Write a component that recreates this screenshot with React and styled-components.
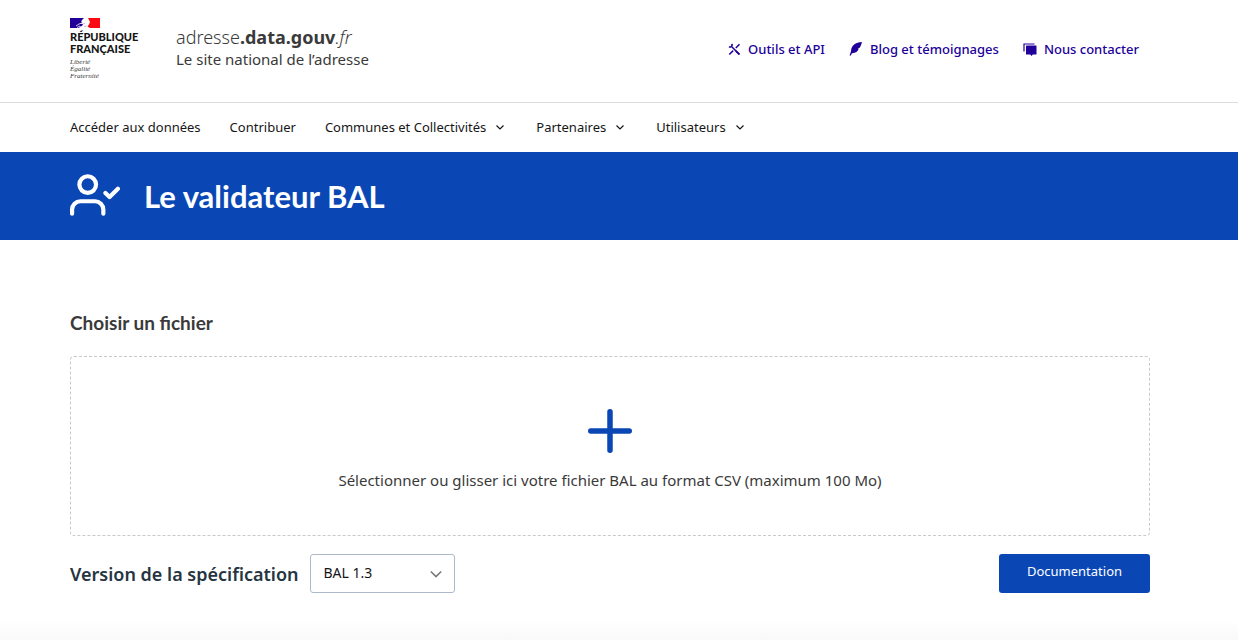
import React from "react";
import styled, { createGlobalStyle } from "styled-components";

const GlobalStyle = createGlobalStyle`
  *, *::before, *::after { box-sizing: border-box; }
  body {
    margin: 0;
    background: #fff;
    color: #3a3a3a;
    font-family: "Noto Sans", "Open Sans", sans-serif;
    font-size: 14px;
  }
  h1, h2, p, ul { margin: 0; padding: 0; }
  ul { list-style: none; }
  a { text-decoration: none; }
`;

const Page = styled.div`
  min-height: 100vh;
  display: flex;
  flex-direction: column;
`;

const Container = styled.div`
  width: 100%;
  padding: 0 88px 0 70px;
`;

const HeaderTop = styled(Container)`
  display: flex;
  align-items: center;
  justify-content: space-between;
  height: 102px;
  padding-bottom: 4px;
`;

const Brand = styled.a`
  display: flex;
  align-items: flex-start;
  gap: 36px;
  color: #3a3a3a;
`;

const Marianne = styled.div`
  display: flex;
  flex-direction: column;
  align-items: flex-start;
  width: 70px;
`;

const StateName = styled.span`
  margin-top: 3px;
  color: #161616;
  font: 900 11px/12px Lato, sans-serif;
  white-space: nowrap;
`;

const Motto = styled.span`
  margin-top: 4px;
  color: #3a3a3a;
  font: italic 7px/7px "Liberation Serif", serif;
`;

const Service = styled.div`
  padding-top: 7px;
`;

const ServiceName = styled.p`
  font-size: 18px;
  line-height: 24px;
  font-weight: 300;

  b { font-weight: 700; }
`;

const ServiceTagline = styled.p`
  font-size: 15px;
  line-height: 20px;
`;

const QuickLinks = styled.ul`
  display: flex;
  gap: 24px;
  padding-right: 11px;
`;

const QuickLink = styled.a`
  display: flex;
  align-items: center;
  gap: 7px;
  color: #21009a;
  font-size: 13px;
  font-weight: 500;
  line-height: 20px;
`;

const NavBar = styled.nav`
  border-top: 1px solid #ddd;
`;

const NavList = styled(Container).attrs({ as: "ul" })`
  display: flex;
  gap: 29px;
  height: 49px;
  align-items: center;
  padding-bottom: 2px;
`;

const navItem = `
  display: flex;
  align-items: center;
  gap: 7px;
  padding: 0;
  border: 0;
  background: none;
  color: #161616;
  font: 400 13px/20px "Noto Sans", sans-serif;
  cursor: pointer;
`;
const NavLink = styled.a`${navItem}`;
const NavButton = styled.button`${navItem}`;

const Banner = styled.header`
  background: #0a47b5;
  color: #fff;
`;

const BannerContent = styled(Container)`
  display: flex;
  align-items: center;
  gap: 24px;
  height: 88px;
  padding-bottom: 2px;
`;

const Title = styled.h1`
  padding-top: 2px;
  font: 700 31px/36px Lato, sans-serif;
`;

const Main = styled(Container).attrs({ as: "main" })`
  flex: 1;
  padding-top: 71px;
  padding-bottom: 47px;
`;

const SectionTitle = styled.h2`
  font: 700 19px/24px Lato, sans-serif;
`;

const DropZone = styled.label`
  display: flex;
  flex-direction: column;
  align-items: center;
  gap: 4px;
  height: 180px;
  margin-top: 21px;
  padding-top: 41px;
  border: 1px dashed #c9c9c9;
  border-radius: 4px;
  line-height: 24px;
  font-size: 15px;
  cursor: pointer;
`;

const FileInput = styled.input`
  position: absolute;
  width: 1px;
  height: 1px;
  opacity: 0;
`;

const Controls = styled.div`
  display: flex;
  align-items: center;
  justify-content: space-between;
  margin-top: 18px;
`;

const Field = styled.div`
  display: flex;
  align-items: center;
  gap: 11px;
`;

const FieldLabel = styled.label`
  color: #26353f;
  font-size: 18px;
  font-weight: 600;
  line-height: 24px;
`;

const SelectBox = styled.div`
  display: grid;
  align-items: center;
  width: 145px;

  > * { grid-area: 1 / 1; }
  > svg { justify-self: end; margin-right: 10px; pointer-events: none; }
`;

const Select = styled.select`
  appearance: none;
  width: 100%;
  height: 39px;
  padding: 0 13px 2px;
  border: 1px solid #adb9c9;
  border-radius: 3px;
  background: #fff;
  color: #161616;
  font: 400 14px/20px "Noto Sans", sans-serif;
`;

const DocButton = styled.button`
  width: 151px;
  height: 39px;
  padding: 0 0 5px;
  border: 0;
  border-radius: 3px;
  background: #0a47b5;
  color: #fff;
  font: 400 13px/20px "Noto Sans", sans-serif;
  cursor: pointer;
`;

const BottomFade = styled.div`
  height: 20px;
  margin-top: -20px;
  background: linear-gradient(#fff, #f9f9f9);
`;

const Flag = () => (
  <svg width="30" height="10" viewBox="0 0 30 10" aria-hidden="true">
    <path fill="#21009a" d="M0 0h14l-1.500 1.500L11 3.500l1.500.5-2 1.500 2.500.5-1 2-2 .5L9 10H0z" />
    <path fill="#fa0a12" d="M18 0h12v10H20l-2.500-1.500 1.500-2L20 4z" />
    <path fill="none" stroke="#fff" strokeWidth=".8" d="M6 8l3-2 3-1M7 9.500l3-1.500" />
    <path fill="none" stroke="#8b8bc8" strokeWidth=".6" d="M13 6l2-.5M14 8.500l2.500-.5" />
  </svg>
);

const ToolsIcon = () => (
  <svg width="13" height="13" viewBox="0 0 13 13" aria-hidden="true" fill="none" stroke="#21009a">
    <path strokeWidth="1.5" d="M11.500 1.200L7.800 5M5.200 7.600L1.300 11.500M4 4l7.500 7.500" />
    <path strokeWidth="1.700" d="M1 3.600c1.600 1 3.500 0 3-2.800M7.800 7.800l3.500 3.500" />
  </svg>
);

const QuillIcon = () => (
  <svg width="14" height="14" viewBox="0 0 14 14" aria-hidden="true">
    <path fill="#21009a" d="M13 0C6.500.5 2.300 3.200 2 9.200L.6 13.500h1.300l1-2.300c3.800.1 6-1.600 6.800-4.400l-1-.4 2-.7C12 4 12.300 2 13 0z" />
  </svg>
);

const ChatIcon = () => (
  <svg width="14" height="13" viewBox="0 0 14 13" aria-hidden="true">
    <path fill="none" stroke="#21009a" strokeWidth="1.200" d="M1 8.500V1h10.500" />
    <path fill="#21009a" d="M3.500 2.500H13a.5.5 0 0 1 .5.500v8a.5.500 0 0 1-.5.500H9.800L8.500 13l-1.300-1.500H3.500A.5.500 0 0 1 3 11V3a.5.500 0 0 1 .5-.5z" />
  </svg>
);

const Chevron = ({ size = 14, color = "#161616", d = "M3.500 5.500L7 9l3.500-3.500" }) => (
  <svg width={size} height={size} viewBox="0 0 14 14" fill="none" stroke={color} strokeWidth="1.200" aria-hidden="true">
    <path d={d} />
  </svg>
);

const UserCheckIcon = () => (
  <svg width="50" height="50" viewBox="0 0 24 24" fill="none" stroke="currentColor" strokeWidth="2" strokeLinecap="round" strokeLinejoin="round" aria-hidden="true">
    <path d="M16 21v-2a4 4 0 0 0-4-4H5a4 4 0 0 0-4 4v2" />
    <circle cx="8.5" cy="7" r="4" />
    <path d="M17 11l2 2 4-4" />
  </svg>
);

const PlusIcon = () => (
  <svg width="66" height="66" viewBox="0 0 24 24" stroke="#0a47b5" strokeWidth="2" strokeLinecap="round" aria-hidden="true">
    <path d="M12 5v14M5 12h14" />
  </svg>
);

const quickLinks = [
  { label: "Outils et API", Icon: ToolsIcon },
  { label: "Blog et témoignages", Icon: QuillIcon },
  { label: "Nous contacter", Icon: ChatIcon },
];

const menus = ["Communes et Collectivités", "Partenaires", "Utilisateurs"];

export default function App() {
  return (
    <Page>
      <GlobalStyle />
      <HeaderTop>
        <Brand href="#">
          <Marianne>
            <Flag />
            <StateName>RÉPUBLIQUE<br />FRANÇAISE</StateName>
            <Motto>Liberté<br />Égalité<br />Fraternité</Motto>
          </Marianne>
          <Service>
            <ServiceName>adresse<b>.data.gouv</b><i>.fr</i></ServiceName>
            <ServiceTagline>Le site national de l’adresse</ServiceTagline>
          </Service>
        </Brand>
        <QuickLinks>
          {quickLinks.map(({ label, Icon }) => (
            <li key={label}><QuickLink href="#"><Icon />{label}</QuickLink></li>
          ))}
        </QuickLinks>
      </HeaderTop>
      <NavBar>
        <NavList>
          <li><NavLink href="#">Accéder aux données</NavLink></li>
          <li><NavLink href="#">Contribuer</NavLink></li>
          {menus.map((label) => (
            <li key={label}><NavButton type="button">{label}<Chevron /></NavButton></li>
          ))}
        </NavList>
      </NavBar>
      <Banner>
        <BannerContent>
          <UserCheckIcon />
          <Title>Le validateur BAL</Title>
        </BannerContent>
      </Banner>
      <Main>
        <SectionTitle>Choisir un fichier</SectionTitle>
        <DropZone>
          <FileInput type="file" accept=".csv" />
          <PlusIcon />
          Sélectionner ou glisser ici votre fichier BAL au format CSV (maximum 100 Mo)
        </DropZone>
        <Controls>
          <Field>
            <FieldLabel htmlFor="version">Version de la spécification</FieldLabel>
            <SelectBox>
              <Select id="version" defaultValue="1.3">
                <option value="1.3">BAL 1.3</option>
              </Select>
              <Chevron size={18} color="#777" d="M3 5l4 4 4-4" />
            </SelectBox>
          </Field>
          <DocButton type="button">Documentation</DocButton>
        </Controls>
      </Main>
      <BottomFade />
    </Page>
  );
}
